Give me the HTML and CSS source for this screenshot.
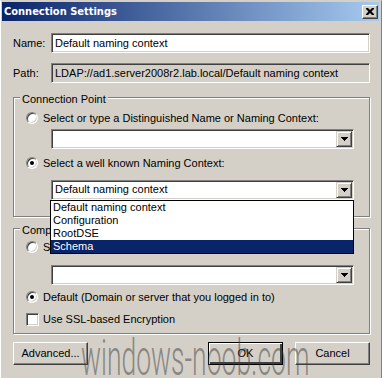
FILE: index.html
```html
<!DOCTYPE html>
<html>
	<head>
		<meta charset="UTF-8">
		<title>Connection Settings</title>
		<link rel="stylesheet" href="styles.css">
	</head>
	<body>
	<div class="window">
		<div class="titlebar">
			<span class="title">Connection Settings</span>
			<span class="close">
				<svg width="8" height="7" viewBox="0 0 8 7"><path d="M0 0h2l2 2 2-2h2v1l-2.5 2.5L8 6v1H6L4 5 2 7H0V6l2.5-2.5L0 1z" fill="#000"/></svg>
			</span>
		</div>
		<div class="body">
			<div class="row">
				<span class="label">Name:</span>
				<div class="field">Default naming context</div>
			</div>
			<div class="row">
				<span class="label">Path:</span>
				<div class="field readonly">LDAP://ad1.server2008r2.lab.local/Default naming context</div>
			</div>

			<div class="group group_point">
				<span class="group_title">Connection Point</span>
				<div class="option option_1"><span class="radio"></span>Select or type a Distinguished Name or Naming Context:</div>
				<div class="combo"><span class="combo_text"></span><span class="combo_btn"><svg width="7" height="4" viewBox="0 0 7 4"><path d="M0 0h7v1H0zM1 1h5v1H1zM2 2h3v1H2zM3 3h1v1H3z" fill="#000"/></svg></span></div>
				<div class="option option_2"><span class="radio on"></span>Select a well known Naming Context:</div>
				<div class="combo_wrap">
					<div class="combo"><span class="combo_text">Default naming context</span><span class="combo_btn"><svg width="7" height="4" viewBox="0 0 7 4"><path d="M0 0h7v1H0zM1 1h5v1H1zM2 2h3v1H2zM3 3h1v1H3z" fill="#000"/></svg></span></div>
					<ul class="dropdown">
						<li>Default naming context</li>
						<li>Configuration</li>
						<li>RootDSE</li>
						<li class="selected">Schema</li>
					</ul>
				</div>
			</div>

			<div class="group group_computer">
				<span class="group_title">Computer</span>
				<div class="option option_1"><span class="radio"></span>Select or type a domain or server:</div>
				<div class="combo combo_3"><span class="combo_text"></span><span class="combo_btn"><svg width="7" height="4" viewBox="0 0 7 4"><path d="M0 0h7v1H0zM1 1h5v1H1zM2 2h3v1H2zM3 3h1v1H3z" fill="#000"/></svg></span></div>
				<div class="option option_3"><span class="radio on"></span>Default (Domain or server that you logged in to)</div>
				<div class="option option_check"><span class="check"></span>Use SSL-based Encryption</div>
			</div>

			<div class="buttons">
				<span class="button">Advanced...</span>
				<span class="spacer"></span>
				<span class="button default">OK</span>
				<span class="button">Cancel</span>
			</div>
		</div>
		<div class="watermark">windows-noob.com</div>
	</div>
	</body>
</html>
```

FILE: styles.css
```css
*{
	padding: 0px;
	margin: 0px;
	box-sizing: border-box;
}
body{
	background: #d4d0c8;
	font-family: "Liberation Sans", Arial, sans-serif;
	font-size: 11px;
	line-height: 13px;
	color: #000;
}
.window{
	position: relative;
	width: 382px;
	height: 378px;
	overflow: hidden;
	background: #d4d0c8;
	border-top: 1px solid #d4d0c8;
	border-left: 1px solid #fff;
	border-right: 1px solid #808080;
	padding: 1px 2px 0 1px;
}
.titlebar{
	display: flex;
	align-items: center;
	justify-content: space-between;
	height: 19px;
	padding: 0 1px 0 2px;
	background: linear-gradient(to right, #0a246a, #a6caf0);
}
.title{
	color: #fff;
	font-family: "DejaVu Sans Condensed", "DejaVu Sans", sans-serif;
	font-weight: bold;
	font-size: 11px;
}
.close{
	display: flex;
	align-items: center;
	justify-content: center;
	width: 16px;
	height: 14px;
	background: #d4d0c8;
	border: 1px solid;
	border-color: #fff #404040 #404040 #fff;
	box-shadow: inset -1px -1px #808080;
}
.body{
	display: flex;
	flex-direction: column;
	padding: 12px 9px 0 11px;
}
.row{
	display: flex;
	align-items: center;
	height: 20px;
	margin-bottom: 10px;
}
.label{
	width: 38px;
}
.field{
	flex: 1;
	height: 20px;
	padding: 3px 3px;
	background: #fff;
	border: 1px solid;
	border-color: #808080 #fff #fff #808080;
	box-shadow: inset 1px 1px #404040, inset -1px -1px #d4d0c8;
	white-space: nowrap;
	overflow: hidden;
}
.field.readonly{
	background: #d4d0c8;
}
.group{
	display: flex;
	flex-direction: column;
	border: 1px solid #808080;
	box-shadow: inset 1px 1px #fff, 1px 1px #fff;
	padding: 0 0 0 12px;
}
.group_point{
	margin-top: 4px;
	height: 120px;
}
.group_computer{
	margin-top: 11px;
	height: 106px;
}
.group_title{
	align-self: flex-start;
	margin: -5px 0 0 -6px;
	padding: 0 2px;
	background: #d4d0c8;
}
.option{
	display: flex;
	align-items: center;
	height: 14px;
	white-space: nowrap;
}
.group_point .option_1{
	margin-top: 5px;
}
.group_computer .option_1{
	margin-top: 3px;
}
.option_2{
	margin-top: 7px;
}
.option_3{
	margin-top: 5px;
}
.option_check{
	margin-top: 8px;
}
.radio{
	position: relative;
	width: 12px;
	height: 12px;
	margin-right: 5px;
	border-radius: 50%;
	background: #fff;
	border: 1px solid;
	border-color: #808080 #fff #fff #808080;
	box-shadow: inset 1px 1px #404040, inset -1px -1px #d4d0c8;
	flex: none;
}
.radio.on::after{
	content: "";
	position: absolute;
	left: 3px;
	top: 3px;
	width: 4px;
	height: 4px;
	border-radius: 50%;
	background: #000;
}
.check{
	width: 13px;
	height: 13px;
	margin-right: 4px;
	background: #fff;
	border: 1px solid;
	border-color: #808080 #fff #fff #808080;
	box-shadow: inset 1px 1px #404040, inset -1px -1px #d4d0c8;
	flex: none;
}
.combo_wrap{
	position: relative;
}
.combo{
	display: flex;
	width: 303px;
	height: 20px;
	margin: 4px 0 0 25px;
	padding: 2px;
	background: #fff;
	border: 1px solid;
	border-color: #808080 #fff #fff #808080;
	box-shadow: inset 1px 1px #404040, inset -1px -1px #d4d0c8;
}
.combo_wrap .combo{
	margin-top: 10px;
}
.combo.combo_3{
	margin-top: 11px;
}
.combo_text{
	flex: 1;
	padding: 1px 0 0 1px;
	margin-top: -1px;
}
.combo_btn{
	display: flex;
	align-items: center;
	justify-content: center;
	width: 16px;
	margin-top: -1px;
	margin-bottom: -1px;
	margin-right: -1px;
	background: #d4d0c8;
	border: 1px solid;
	border-color: #d4d0c8 #404040 #404040 #d4d0c8;
	box-shadow: inset 1px 1px #fff, inset -1px -1px #808080;
}
.combo_btn svg{
	display: block;
}
.dropdown{
	position: absolute;
	left: 24px;
	top: 30px;
	width: 304px;
	list-style: none;
	background: #fff;
	border: 1px solid #000;
	z-index: 2;
}
.dropdown li{
	height: 13px;
	padding-left: 2px;
	line-height: 13px;
}
.dropdown li.selected{
	background: #0a246a;
	color: #fff;
}
.buttons{
	display: flex;
	margin-top: 8px;
	gap: 12px;
}
.spacer{
	flex: 1;
}
.button{
	display: flex;
	align-items: center;
	justify-content: center;
	width: 75px;
	height: 23px;
	background: #d4d0c8;
	border: 1px solid;
	border-color: #fff #404040 #404040 #fff;
	box-shadow: inset -1px -1px #808080;
}
.button.default{
	border: 1px solid #000;
	box-shadow: inset 1px 1px #fff, inset -2px -2px #404040, inset -1px -1px #808080;
}
.watermark{
	position: absolute;
	left: 80px;
	top: 332px;
	font-family: Roboto, "DejaVu Sans Condensed", sans-serif;
	font-weight: 300;
	font-size: 50px;
	line-height: 50px;
	color: rgba(60, 60, 60, 0.5);
	white-space: nowrap;
	transform: scaleX(0.53);
	transform-origin: left top;
	z-index: 3;
}
```
